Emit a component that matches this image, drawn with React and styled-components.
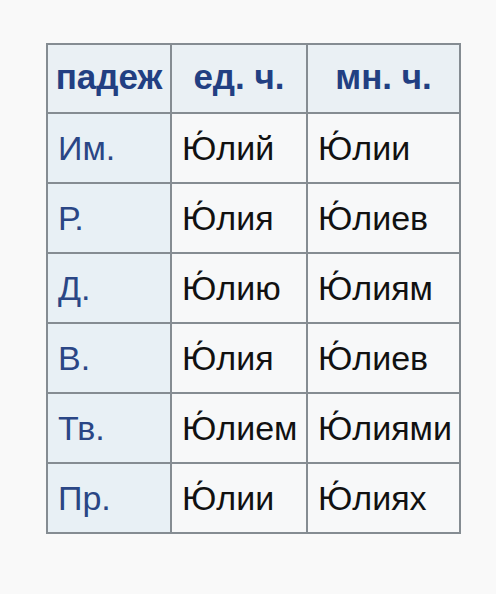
import React from "react";
import styled, { createGlobalStyle } from "styled-components";

const Global = createGlobalStyle`
  html, body { margin: 0; padding: 0; background: #f9f9f9; }
  body { font-family: "Liberation Sans", Arial, sans-serif; }
`;

const Page = styled.div`
  width: 496px;
  height: 594px;
  box-sizing: border-box;
  padding: 43px 0 0 46px;
  background: #f9f9f9;
`;

const Table = styled.table`
  border-collapse: collapse;
  table-layout: fixed;
  font-family: "Liberation Sans", Arial, sans-serif;
  border: 2px solid #858c92;
`;

const HeadCell = styled.th`
  width: ${(p) => p.$w}px;
  height: 64px;
  padding: 0 0 3px 0;
  border: 2px solid #858c92;
  background: #eaf0f4;
  color: #223f82;
  font-size: 35px;
  font-weight: 700;
  text-align: center;
  vertical-align: middle;
  white-space: nowrap;
`;

const CaseCell = styled.td`
  height: 68px;
  padding: 0 0 0 10px;
  border: 2px solid #858c92;
  background: #e8f0f5;
  color: #2a4685;
  font-size: 34px;
  text-align: left;
  vertical-align: middle;
  white-space: nowrap;
`;

const FormCell = styled.td`
  height: 68px;
  padding: 0 0 0 10px;
  border: 2px solid #858c92;
  background: #f7f8f9;
  color: #111;
  font-size: 34px;
  text-align: left;
  vertical-align: middle;
  white-space: nowrap;
`;

const A = "\u0301";
const rows = [
  ["Им.", "Ю" + A + "лий", "Ю" + A + "лии"],
  ["Р.", "Ю" + A + "лия", "Ю" + A + "лиев"],
  ["Д.", "Ю" + A + "лию", "Ю" + A + "лиям"],
  ["В.", "Ю" + A + "лия", "Ю" + A + "лиев"],
  ["Тв.", "Ю" + A + "лием", "Ю" + A + "лиями"],
  ["Пр.", "Ю" + A + "лии", "Ю" + A + "лиях"],
];

export default function App() {
  return (
    <Page>
      <Global />
      <Table>
        <thead>
          <tr>
            <HeadCell $w={122}>падеж</HeadCell>
            <HeadCell $w={134}>ед. ч.</HeadCell>
            <HeadCell $w={151}>мн. ч.</HeadCell>
          </tr>
        </thead>
        <tbody>
          {rows.map((r) => (
            <tr key={r[0]}>
              <CaseCell>{r[0]}</CaseCell>
              <FormCell>{r[1]}</FormCell>
              <FormCell>{r[2]}</FormCell>
            </tr>
          ))}
        </tbody>
      </Table>
    </Page>
  );
}
